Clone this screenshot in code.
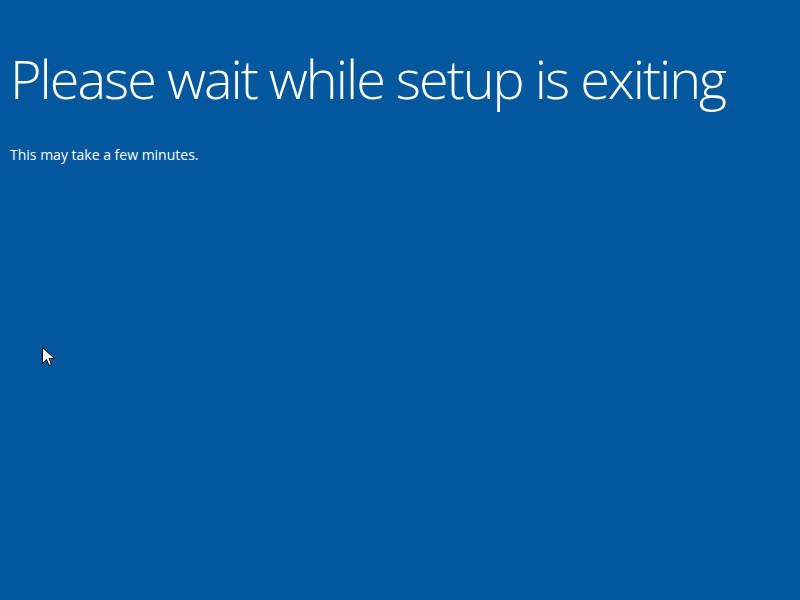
import React from "react";

export default function App() {
  return (
    <div className="relative w-[800px] h-[600px] bg-[#02579d] overflow-hidden text-white" style={{ fontFamily: '"Open Sans", "Noto Sans", sans-serif' }}>
      <div className="pl-[10px] pt-[42px]">
        <h1 className="text-[54px] font-light leading-[72px] tracking-[-2px] whitespace-nowrap">Please wait while setup is exiting</h1>
        <p className="mt-[32px] text-[14px] leading-[18px]">This may take a few minutes.</p>
      </div>
      <svg className="absolute left-[42px] top-[347px]" width="13" height="20" viewBox="0 0 13 20">
        <path d="M0.5 0.5 L0.5 16.5 L4.5 12.5 L7 18.5 L9.5 17.5 L7 11.5 L12.5 11.5 Z" fill="white" stroke="black" strokeWidth="1" strokeLinejoin="miter" />
      </svg>
    </div>
  );
}
